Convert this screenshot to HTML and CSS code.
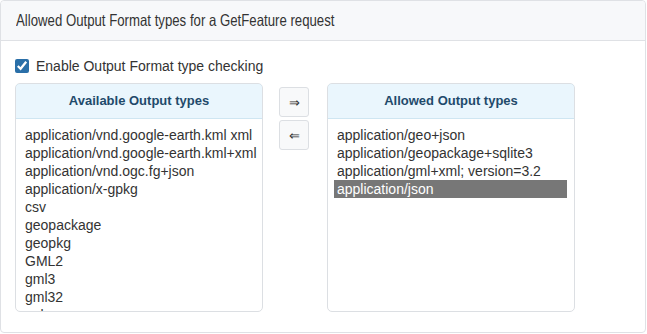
FILE: index.html
```html
<!DOCTYPE html>
<html lang="en">
<head>
  <meta charset="UTF-8">
  <title>Output Format types</title>
  <link rel="stylesheet" href="styles.css">
</head>
<body>

<div class="panel">
  <div class="panel-heading"><span class="panel-title">Allowed Output Format types for a GetFeature request</span></div>
  <div class="panel-body">
    <label class="check-row">
      <input type="checkbox" checked>
      <span>Enable Output Format type checking</span>
    </label>

    <div class="palette">
      <div class="list-box">
        <div class="list-header">Available Output types</div>
        <div class="list-body">
          <div class="item">application/vnd.google-earth.kml xml</div>
          <div class="item">application/vnd.google-earth.kml+xml</div>
          <div class="item">application/vnd.ogc.fg+json</div>
          <div class="item">application/x-gpkg</div>
          <div class="item">csv</div>
          <div class="item">geopackage</div>
          <div class="item">geopkg</div>
          <div class="item">GML2</div>
          <div class="item">gml3</div>
          <div class="item">gml32</div>
          <div class="item">gpkg</div>
          <div class="item">json</div>
          <div class="item">KML</div>
          <div class="item">SHAPE-ZIP</div>
          <div class="item">text/csv</div>
          <div class="item">text/javascript</div>
          <div class="item">text/xml; subtype=gml/2.1.2</div>
          <div class="item">text/xml; subtype=gml/3.1.1</div>
        </div>
      </div>

      <div class="move-buttons">
        <button class="btn-move" type="button">&rArr;</button>
        <button class="btn-move" type="button">&lArr;</button>
      </div>

      <div class="list-box">
        <div class="list-header">Allowed Output types</div>
        <div class="list-body">
          <div class="item">application/geo+json</div>
          <div class="item">application/geopackage+sqlite3</div>
          <div class="item">application/gml+xml; version=3.2</div>
          <div class="item selected">application/json</div>
        </div>
      </div>
    </div>
  </div>
</div>

</body>
</html>
```

FILE: styles.css
```css
body {
  margin: 0;
  font-family: "Liberation Sans", Arial, sans-serif;
  background: white;
  color: #333;
}

.panel {
  width: 646px;
  height: 333px;
  border: 1px solid #dfe1e5;
  border-radius: 4px;
  box-sizing: border-box;
}

.panel-heading {
  height: 40px;
  padding: 0 15px;
  line-height: 39px;
  font-size: 16.5px;
  background: #f7f8fa;
  border-bottom: 1px solid #dfe1e5;
  box-sizing: border-box;
  border-radius: 4px 4px 0 0;
  white-space: nowrap;
}

/* the original heading font is a narrow face, squeeze ours to the same width */
.panel-title {
  display: inline-block;
  transform: scaleX(0.8);
  transform-origin: left center;
}

.panel-body {
  padding: 15px 14px 0 14px;
}

.check-row {
  display: flex;
  align-items: center;
  gap: 7px;
  height: 19px;
  font-size: 14px;
}

.check-row input {
  margin: 0;
  width: 14px;
  height: 14px;
  accent-color: #2a6fa8;
}

.palette {
  display: flex;
  margin-top: 8px;
}

.list-box {
  width: 248px;
  height: 229px;
  border: 1px solid #dcdfe3;
  border-radius: 5px;
  box-sizing: border-box;
  display: flex;
  flex-direction: column;
  overflow: hidden;
}

.list-header {
  height: 34px;
  line-height: 33px;
  text-align: center;
  font-size: 13px;
  font-weight: bold;
  color: #1f4a6b;
  background: #eaf6fd;
  border: 1px solid #bde3f3;
  border-bottom-color: #cfe6f2;
  border-radius: 5px 5px 0 0;
  margin: -1px -1px 0 -1px;
}

.list-body {
  flex: 1;
  overflow-y: scroll;
  padding: 7px 6px 0 6px;
  font-size: 14px;
  line-height: 18px;
  color: #333;
}

.list-body::-webkit-scrollbar {
  width: 5px;
}

.list-body::-webkit-scrollbar-track {
  background: #f6f6f6;
}

.list-body::-webkit-scrollbar-thumb {
  background: #c1c1c1;
}

.list-box:last-child .list-body {
  overflow-y: hidden;
  padding-right: 7px;
}

.item {
  padding-left: 3px;
  white-space: nowrap;
}

.item.selected {
  background: #777;
  color: white;
}

.move-buttons {
  display: flex;
  flex-direction: column;
  gap: 3px;
  margin: 4px 18px 0 16px;
}

.btn-move {
  width: 30px;
  height: 30px;
  padding: 0;
  background: #f8f9fa;
  border: 1px solid #dcdfe3;
  border-radius: 3px;
  font-size: 13px;
  color: #333;
  cursor: pointer;
}
```
